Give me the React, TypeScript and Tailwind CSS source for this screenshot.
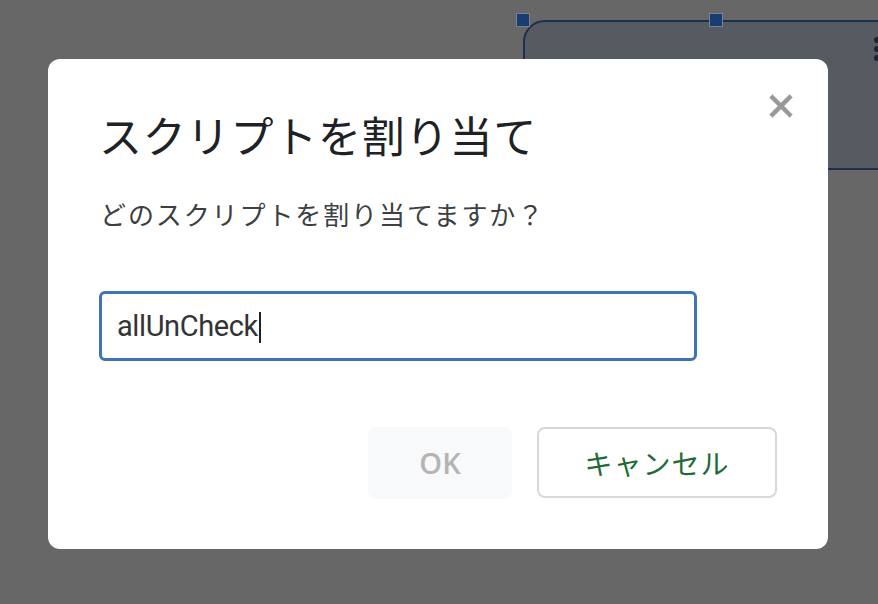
import React from "react";

export default function App() {
  return (
    <div className="relative w-[878px] h-[604px] overflow-hidden bg-[#676767]" style={{ fontFamily: '"Noto Sans CJK JP", "Noto Sans", sans-serif' }}>
      {/* canvas shape behind */}
      <div className="absolute left-[523px] top-[20px] w-[400px] h-[150px] rounded-tl-[22px] border-2 border-[#1c2f4d] bg-[#565b62]" />
      <div className="absolute left-[516px] top-[13px] w-[14px] h-[14px] bg-[#173d72] border border-[#7a8290]" />
      <div className="absolute left-[709px] top-[13px] w-[14px] h-[14px] bg-[#173d72] border border-[#7a8290]" />
      <div className="absolute left-[874px] top-[37px] flex flex-col gap-[3px]">
        <div className="w-[6px] h-[6px] rounded-full bg-[#1f2530]" />
        <div className="w-[6px] h-[6px] rounded-full bg-[#1f2530]" />
        <div className="w-[6px] h-[6px] rounded-full bg-[#1f2530]" />
      </div>

      {/* dialog */}
      <div className="absolute left-[48px] top-[59px] w-[780px] h-[490px] rounded-[12px] bg-white flex flex-col pl-[51px] pr-[35px]">
        <div className="flex items-start justify-between pt-[46px]">
          <div className="text-[43px] leading-[58px] text-[#202124] tracking-[0.8px]">スクリプトを割り当て</div>
          <svg width="24" height="24" viewBox="0 0 24 24" className="mt-[-11px]" style={{ filter: "blur(0.6px)" }}>
            <path d="M3.5 3.5 L20.5 20.5 M20.5 3.5 L3.5 20.5" stroke="#999999" strokeWidth="4.5" strokeLinecap="square" />
          </svg>
        </div>
        <div className="mt-[33px] text-[26px] leading-[36px] text-[#3c4043] tracking-[1.9px] pl-[1px]">どのスクリプトを割り当てますか？</div>
        <div className="mt-[59px] w-[598px] h-[70px] rounded-[6px] border-[3px] border-[#3d74b3] flex items-center pl-[15px]">
          <span className="text-[29px] text-[#333] tracking-[-0.4px] mt-[2px]" style={{ fontFamily: 'Roboto, "Noto Sans", sans-serif' }}>allUnCheck</span>
          <span className="w-[2px] h-[31px] bg-[#202124] ml-[1px] mt-[2px]" />
        </div>
        <div className="mt-[66px] flex justify-end gap-[25px] pr-[16px]">
          <div className="w-[144px] h-[72px] rounded-[8px] bg-[#f8f9fa] flex items-center justify-center text-[29px] font-semibold text-[#b4b4b4]" style={{ fontFamily: '"Open Sans", Roboto, sans-serif' }}>OK</div>
          <div className="w-[240px] h-[71px] rounded-[8px] border-2 border-[#d8d8d8] flex items-center justify-center text-[28px] text-[#1e6b35] tracking-[1px]">キャンセル</div>
        </div>
      </div>
    </div>
  );
}
